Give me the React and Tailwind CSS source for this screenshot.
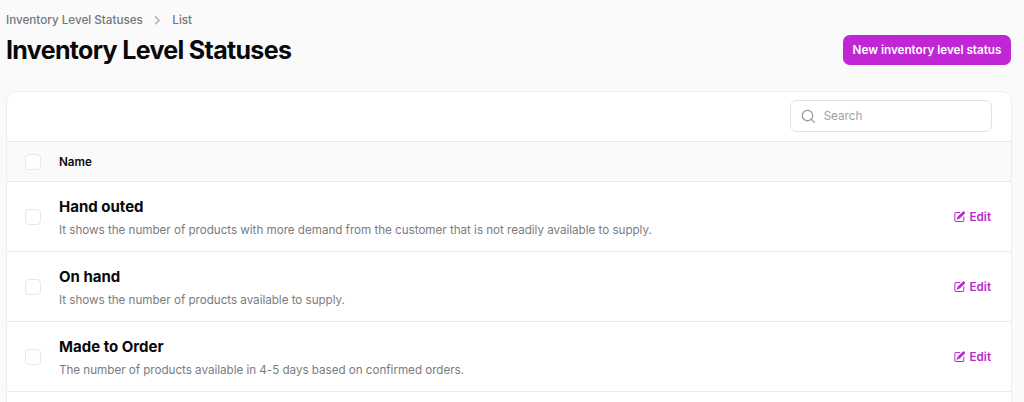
const rows = [
  { name: 'Hand outed', text: 'It shows the number of products with more demand from the customer that is not readily available to supply.' },
  { name: 'On hand', text: 'It shows the number of products available to supply.' },
  { name: 'Made to Order', text: 'The number of products available in 4-5 days based on confirmed orders.' },
];

function Checkbox({ label }) {
  return (
    <input
      type="checkbox"
      aria-label={label}
      className="block size-4 shrink-0 appearance-none rounded-[4px] border border-[#e8e8e9] bg-white"
    />
  );
}

function ChevronIcon() {
  return (
    <svg viewBox="0 0 20 20" fill="currentColor" className="size-[16.67px] text-[#a1a1aa]">
      <path fillRule="evenodd" clipRule="evenodd" d="M7.21 14.77a.75.75 0 01.02-1.06L11.168 10 7.23 6.29a.75.75 0 111.04-1.08l4.5 4.25a.75.75 0 010 1.08l-4.5 4.25a.75.75 0 01-1.06-.02z" />
    </svg>
  );
}

function SearchIcon() {
  return (
    <svg viewBox="0 0 20 20" fill="currentColor" className="size-[16.67px] shrink-0 text-[#9b9b9f]">
      <path fillRule="evenodd" clipRule="evenodd" d="M9 3.5a5.5 5.5 0 1 0 0 11 5.5 5.5 0 0 0 0-11ZM2 9a7 7 0 1 1 12.452 4.391l3.328 3.329a.75.75 0 1 1-1.06 1.06l-3.329-3.328A7 7 0 0 1 2 9Z" />
    </svg>
  );
}

function EditIcon() {
  return (
    <svg viewBox="0 0 20 20" fill="currentColor" className="size-[13.33px]">
      <path d="m5.433 13.917 1.262-3.155A4 4 0 0 1 7.58 9.42l6.92-6.918a2.121 2.121 0 0 1 3 3l-6.92 6.918c-.383.383-.84.685-1.343.886l-3.154 1.262a.5.5 0 0 1-.65-.65Z" />
      <path d="M3.5 5.75c0-.69.56-1.25 1.25-1.25H10A.75.75 0 0 0 10 3H4.75A2.75 2.75 0 0 0 2 5.75v9.5A2.75 2.75 0 0 0 4.75 18h9.5A2.75 2.75 0 0 0 17 15.25V10a.75.75 0 0 0-1.5 0v5.25c0 .69-.56 1.25-1.25 1.25h-9.5c-.69 0-1.25-.56-1.25-1.25v-9.5Z" />
    </svg>
  );
}

export default function App() {
  return (
    <div className="h-[402px] overflow-hidden bg-[#fafafa] pt-[11px] pr-[13px] pl-1.5 font-['Inter',sans-serif] text-[11.67px] text-[#09090b]">
      <header className="flex h-20 items-start justify-between">
        <div>
          <nav className="flex h-[18px] items-center gap-[6.4px] font-medium text-[#76767c]">
            <span className="pt-0.5">Inventory Level Statuses</span>
            <ChevronIcon />
            <span className="pt-0.5">List</span>
          </nav>
          <h1 className="mt-[5px] text-[25px] leading-8 font-bold tracking-[-0.027em]">Inventory Level Statuses</h1>
        </div>
        <button className="mt-6 h-[30px] w-[168px] rounded-[6.67px] bg-[#c026d3] pt-0.5 font-semibold whitespace-nowrap text-white">
          New inventory level status
        </button>
      </header>

      <main className="mr-[-1px] h-[330px] rounded-t-[10px] border border-[#eeeeef] bg-white">
        <div className="flex h-[50px] items-center justify-end border-b border-[#e9e9ea] pr-[19px]">
          <label className="mb-px flex h-8 w-[202px] items-center gap-[6.67px] rounded-[7px] border border-[#e2e2e4] bg-white pl-[9.33px]">
            <SearchIcon />
            <input
              type="text"
              placeholder="Search"
              className="w-40 bg-transparent pt-px outline-none placeholder:text-[#a1a1aa]"
            />
          </label>
        </div>
        <div className="flex h-10 items-center gap-[18px] border-b border-[#e9e9ea] bg-[#fafafa] pl-[18px]">
          <Checkbox label="Select all" />
          <span className="pt-0.5 font-semibold">Name</span>
        </div>
        {rows.map((row) => (
          <div key={row.name} className="flex h-[70px] items-center gap-[18px] border-b border-[#ebebec] pr-5 pl-[18px]">
            <Checkbox label={row.name} />
            <div className="flex-1 pt-0.5">
              <p className="text-[15px] leading-6 font-bold">{row.name}</p>
              <p className="leading-[22px] tracking-[-0.03px] text-[#7c7c80]">{row.text}</p>
            </div>
            <a href="#" className="flex items-center gap-[3.33px] font-semibold text-[#b92bcb]">
              <EditIcon />
              <span className="pt-0.5">Edit</span>
            </a>
          </div>
        ))}
      </main>
    </div>
  );
}
